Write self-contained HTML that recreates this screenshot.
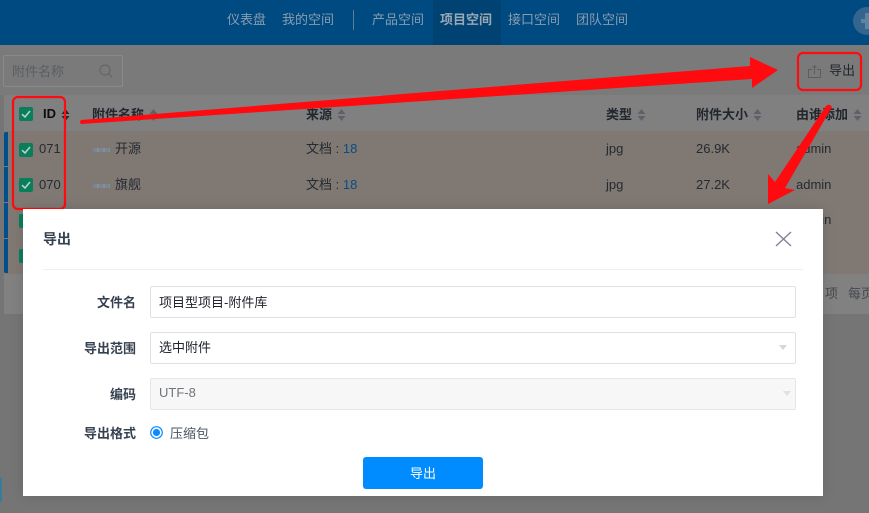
<!DOCTYPE html>
<html lang="zh">
<head>
<meta charset="utf-8">
<style>
html,body{margin:0;padding:0;width:869px;height:513px;overflow:hidden;background:#757575}
body{font-family:"Liberation Sans","Noto Sans CJK SC",sans-serif;position:relative;font-size:13px;color:#23272e}
.a{position:absolute;white-space:nowrap;line-height:18px}
.box{position:absolute}
.nav{color:#8a9cae;font-size:13px;top:11px}
.th{font-weight:bold;top:106px;color:#22262d}
.cell{color:#262a31}
.cb{position:absolute;width:14px;height:14px;border-radius:2px;background:#0a7d5b;left:19px}
.cb svg{position:absolute;left:0;top:0}
.sort{position:absolute;width:9px;height:12px}
.lab{color:#36414f;font-weight:bold;right:733px}
.inp{position:absolute;left:150px;width:644px;height:30px;border:1px solid #dfe1e4;border-radius:2px;background:#fff}
.thumb{position:absolute;width:17px;height:4px;background:repeating-linear-gradient(90deg,#77859a 0 4px,#8f8c8c 4px 6px)}
</style>
</head>
<body>
<div class="box" style="left:0;top:0;width:869px;height:45px;background:#004a82"></div>
<div class="box" style="left:433px;top:0;width:68px;height:45px;background:#004272"></div>
<div class="a nav" style="left:227px">仪表盘</div>
<div class="a nav" style="left:282px">我的空间</div>
<div class="box" style="left:353px;top:10px;width:1px;height:20px;background:#5b7f9c"></div>
<div class="a nav" style="left:372px">产品空间</div>
<div class="a nav" style="left:440px;font-weight:bold;color:#9aa8b5">项目空间</div>
<div class="a nav" style="left:508px">接口空间</div>
<div class="a nav" style="left:576px">团队空间</div>
<div class="box" style="left:853px;top:7px;width:28px;height:28px;border-radius:50%;background:#33658f"></div>
<div class="box" style="left:861px;top:19px;width:12px;height:4px;background:#5f84a2"></div>
<div class="box" style="left:865px;top:13px;width:4px;height:16px;background:#5f84a2"></div>

<div class="box" style="left:0;top:45px;width:869px;height:50px;background:#7a7a7a"></div>
<div class="box" style="left:3px;top:55px;width:118px;height:30px;border:1px solid #8a8a8a;border-radius:2px"></div>
<div class="a" style="left:12px;top:63px;color:#5a5e63">附件名称</div>
<svg class="box" style="left:99px;top:64px" width="14" height="14" viewBox="0 0 14 14" fill="none" stroke="#5e6267" stroke-width=".9"><circle cx="6" cy="6" r="5"/><path d="M9.7 9.7L13 13"/></svg>

<svg class="box" style="left:808px;top:65px" width="13" height="13" viewBox="0 0 13 13" fill="none" stroke="#5a5e63" stroke-width="1"><path d="M4 4.5H.5V12.5H12.5V4.5H9M6.5 9V.7M4.5 2.7L6.5 .7L8.5 2.7"/></svg>
<div class="a" style="left:829px;top:62px;color:#23272e">导出</div>

<div class="box" style="left:4px;top:95px;width:865px;height:36px;background:#808080"></div>
<div class="box" style="left:4px;top:131px;width:865px;height:143px;background:#7f7873"></div>
<div class="box" style="left:4px;top:274px;width:865px;height:40px;background:#818181"></div>
<div class="box" style="left:4px;top:132px;width:4px;height:34px;background:#004f8c;border-radius:2px 0 0 0"></div>
<div class="box" style="left:4px;top:167px;width:4px;height:35px;background:#004f8c"></div>
<div class="box" style="left:4px;top:203px;width:4px;height:35px;background:#004f8c"></div>
<div class="box" style="left:4px;top:239px;width:4px;height:34px;background:#004f8c;border-radius:0 0 0 2px"></div>

<div class="cb" style="top:107px"><svg width="14" height="14" fill="none" stroke="#b5d5c8" stroke-width="1.6"><path d="M3 7.2L6 10L11 4"/></svg></div>
<div class="cb" style="top:143px"><svg width="14" height="14" fill="none" stroke="#b5d5c8" stroke-width="1.6"><path d="M3 7.2L6 10L11 4"/></svg></div>
<div class="cb" style="top:178px"><svg width="14" height="14" fill="none" stroke="#b5d5c8" stroke-width="1.6"><path d="M3 7.2L6 10L11 4"/></svg></div>
<div class="cb" style="top:214px"></div>
<div class="cb" style="top:249px"></div>

<div class="a th" style="left:43px;color:#0c0c0c;top:105px">ID</div>
<div class="a th" style="left:92px">附件名称</div>
<div class="a th" style="left:306px">来源</div>
<div class="a th" style="left:606px">类型</div>
<div class="a th" style="left:696px">附件大小</div>
<div class="a th" style="left:796px">由谁添加</div>

<svg class="sort" style="left:61px;top:109px" viewBox="0 0 9 12" fill="#22262d"><path d="M4.5 0L8.5 5H.5ZM4.5 12L.5 7H8.5Z"/></svg>
<svg class="sort" style="left:149px;top:109px" viewBox="0 0 9 12" fill="#5e6268"><path d="M4.5 0L8.5 5H.5ZM4.5 12L.5 7H8.5Z"/></svg>
<svg class="sort" style="left:337px;top:109px" viewBox="0 0 9 12" fill="#5e6268"><path d="M4.5 0L8.5 5H.5ZM4.5 12L.5 7H8.5Z"/></svg>
<svg class="sort" style="left:637px;top:109px" viewBox="0 0 9 12" fill="#5e6268"><path d="M4.5 0L8.5 5H.5ZM4.5 12L.5 7H8.5Z"/></svg>
<svg class="sort" style="left:753px;top:109px" viewBox="0 0 9 12" fill="#5e6268"><path d="M4.5 0L8.5 5H.5ZM4.5 12L.5 7H8.5Z"/></svg>
<svg class="sort" style="left:853px;top:109px" viewBox="0 0 9 12" fill="#5e6268"><path d="M4.5 0L8.5 5H.5ZM4.5 12L.5 7H8.5Z"/></svg>

<div class="a cell" style="left:39px;top:140px">071</div>
<div class="a cell" style="left:39px;top:176px">070</div>
<div class="thumb" style="left:93px;top:148px"></div>
<div class="thumb" style="left:93px;top:184px"></div>
<div class="a cell" style="left:115px;top:140px">开源</div>
<div class="a cell" style="left:115px;top:176px">旗舰</div>
<div class="a cell" style="left:306px;top:140px">文档 : <span style="color:#074d85">18</span></div>
<div class="a cell" style="left:306px;top:176px">文档 : <span style="color:#074d85">18</span></div>
<div class="a cell" style="left:606px;top:140px">jpg</div>
<div class="a cell" style="left:606px;top:176px">jpg</div>
<div class="a cell" style="left:696px;top:140px">26.9K</div>
<div class="a cell" style="left:696px;top:176px">27.2K</div>
<div class="a cell" style="left:796px;top:140px">admin</div>
<div class="a cell" style="left:796px;top:176px">admin</div>
<div class="a cell" style="left:796px;top:211px">admin</div>
<div class="a" style="left:825px;top:285px;color:#45494f">项</div>
<div class="a" style="left:848px;top:285px;color:#45494f">每页</div>
<div class="box" style="left:-6px;top:477px;width:8px;height:26px;background:#3a7b99;border-radius:3px"></div>

<svg class="box" style="left:0;top:0" width="869" height="513" fill="none">
<path d="M81 120L750 66L750 57L778 70L752 88L752 79L81 124Q79 122 81 120Z" fill="#ff0a0f"/>
<path d="M826 106Q829 103 832 107L785 188L795 190L768 204L768 174L775 182Z" fill="#ff0a0f"/>
<rect x="13" y="97" width="52" height="112" rx="5" stroke="#ff0a0f" stroke-width="2.2"/>
<rect x="798" y="53" width="63" height="37" rx="5" stroke="#ff0a0f" stroke-width="2.2"/>
</svg>

<div class="box" style="left:23px;top:209px;width:800px;height:287px;background:#fff;box-shadow:0 0 12px rgba(0,0,0,.12)"></div>
<div class="a" style="left:43px;top:230px;color:#36414f;font-weight:bold;font-size:14px">导出</div>
<svg class="box" style="left:775px;top:231px" width="17" height="16" fill="none" stroke="#7d8696" stroke-width="1.4"><path d="M1 1L16 15M16 1L1 15"/></svg>
<div class="box" style="left:43px;top:269px;width:760px;height:1px;background:#eeeeee"></div>

<div class="a lab" style="top:294px">文件名</div>
<div class="a lab" style="top:340px">导出范围</div>
<div class="a lab" style="top:386px">编码</div>
<div class="a lab" style="top:425px">导出格式</div>

<div class="inp" style="top:286px"></div>
<div class="inp" style="top:332px"></div>
<div class="inp" style="top:378px;background:#f7f7f7;border-color:#e6e6e6"></div>
<div class="a" style="left:159px;top:294px;color:#20242b">项目型项目-附件库</div>
<div class="a" style="left:159px;top:339px;color:#20242b">选中附件</div>
<div class="a" style="left:159px;top:384px;color:#70757c">UTF-8</div>
<svg class="box" style="left:779px;top:345px" width="8" height="5"><path d="M0 0H8L4 5Z" fill="#d3d7de"/></svg>
<svg class="box" style="left:783px;top:391px" width="8" height="5"><path d="M0 0H8L4 5Z" fill="#dde0e5"/></svg>

<svg class="box" style="left:150px;top:426px" width="13" height="13"><circle cx="6.5" cy="6.5" r="5.8" fill="#fff" stroke="#0a8cff" stroke-width="1.2"/><circle cx="6.5" cy="6.5" r="3.6" fill="#0a8cff"/></svg>
<div class="a" style="left:170px;top:425px;color:#4a5260">压缩包</div>

<div class="box" style="left:363px;top:457px;width:120px;height:32px;background:#008cff;border-radius:3px"></div>
<div class="a" style="left:410px;top:465px;color:#fff">导出</div>
</body>
</html>
